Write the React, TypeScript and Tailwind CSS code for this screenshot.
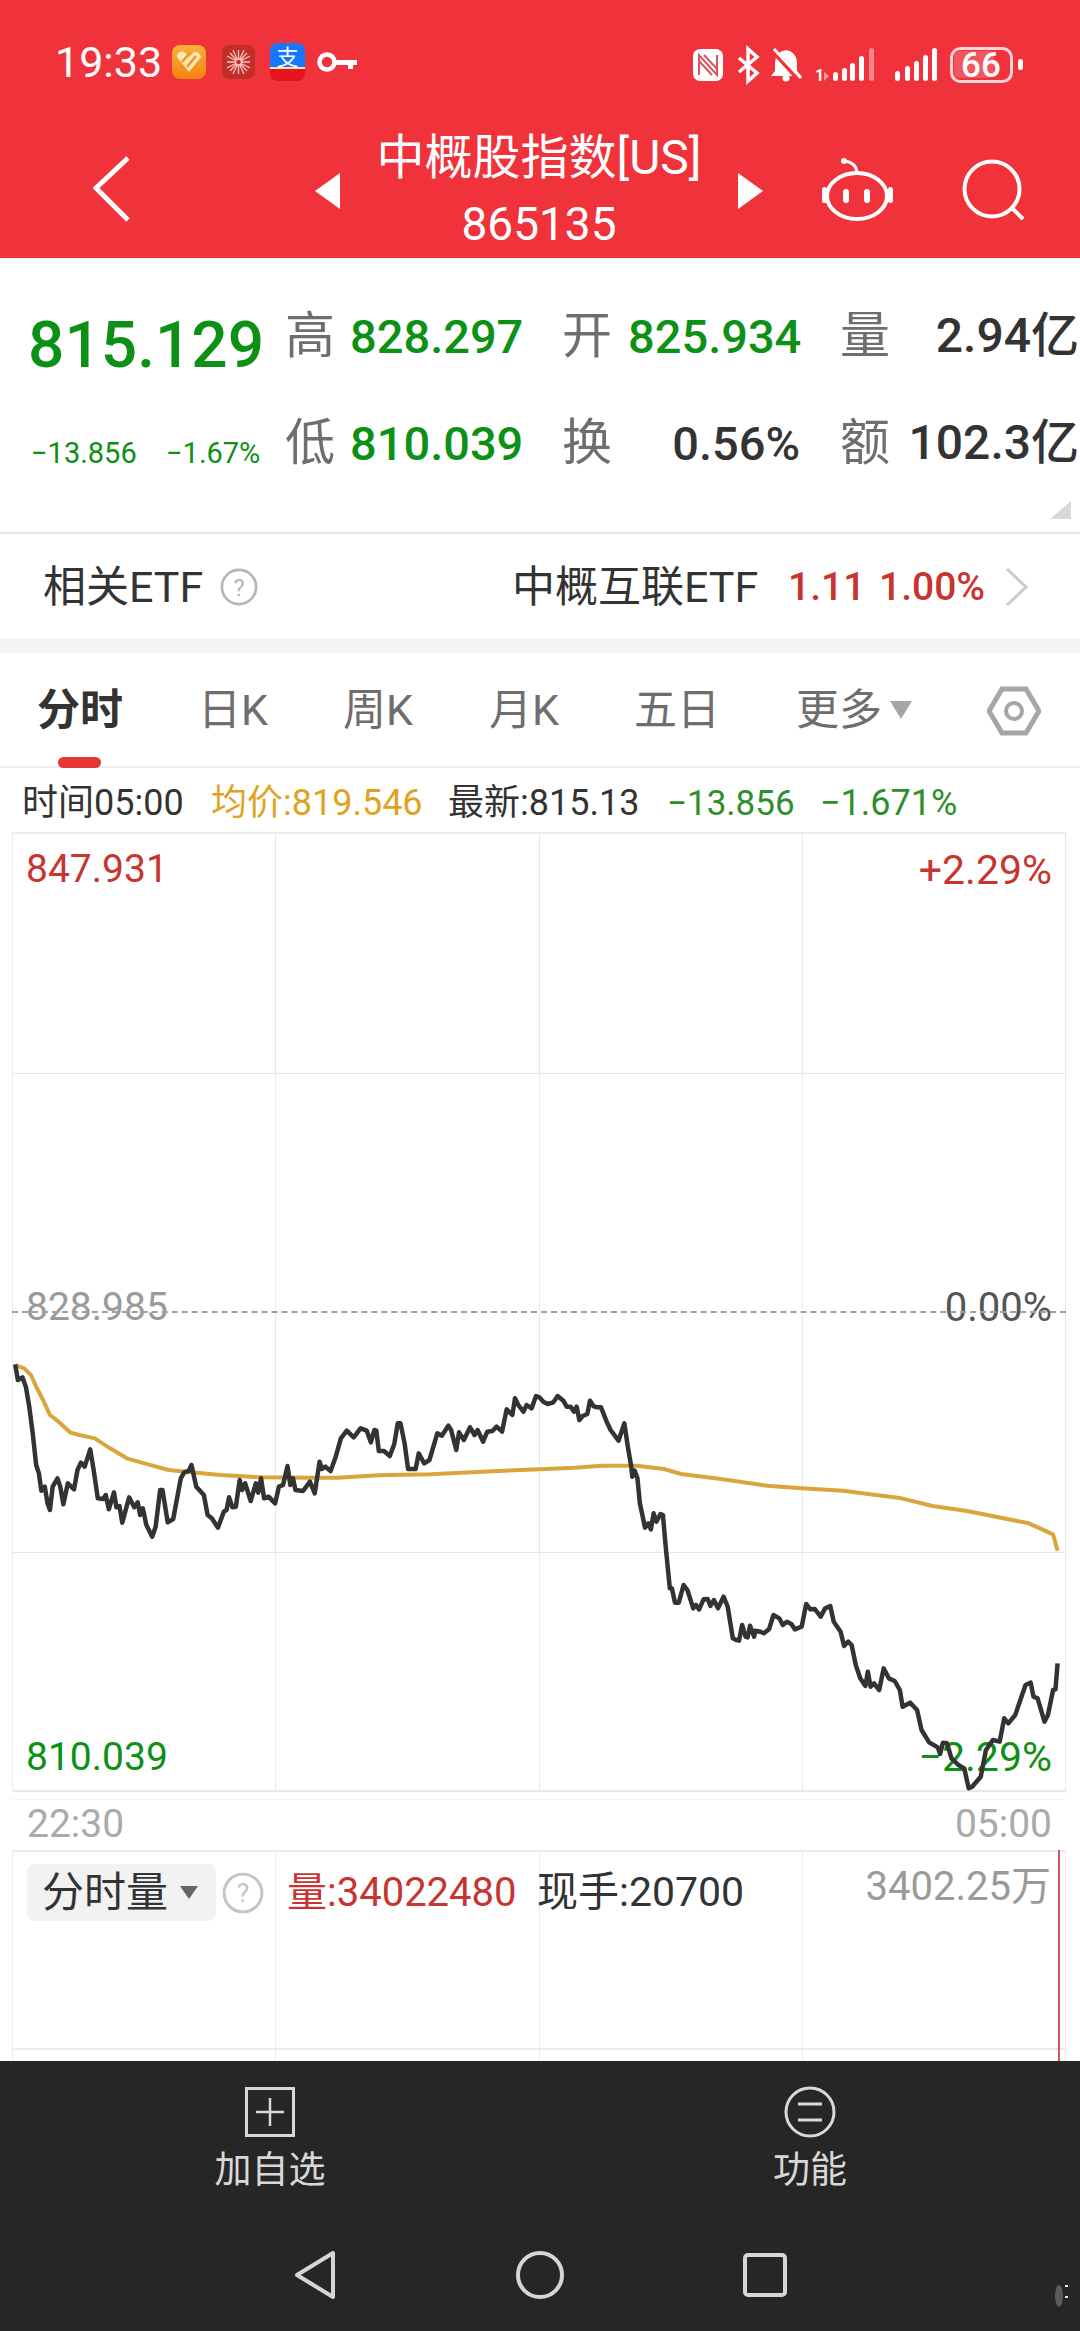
const priceA = [[44,283],[52,330],[65,322],[75,350],[85,410],[95,490],[105,585],[113,610],[120,662],[130,650],[138,700],[145,720],[153,650],[167,625],[175,650],[184,703],[197,640],[215,658],[225,600],[235,578],[246,590],[262,538],[272,600],[284,685],[300,687],[307,675],[316,718],[331,667],[338,712],[347,708],[355,758],[375,682],[390,712],[400,697],[407,735],[415,715],[425,765],[442,800],[452,770],[465,660],[472,660],[487,757],[503,747],[525,625],[535,607],[548,603],[556,585],[570,650],[592,675],[603,735],[615,745],[633,773],[650,725],[658,720],[665,682],[675,712],[685,710],[696,630],[703,660],[712,640],[728,693],[743,640],[750,668],[758,625],[767,685],[780,680],[799,700],[810,650],[822,645],[835,588],[843,645],[851,625],[858,660],[880,663],[900,635],[914,670],[928,575],[935,597],[945,590],[960,603],[975,560],[990,505],[1007,482],[1027,502],[1047,475],[1065,482],[1077,517],[1087,480],[1093,482],[1100,543],[1115,543],[1132,558],[1145,522],[1155,460],[1163,460],[1175,520],[1185,597],[1207,597],[1216,550],[1232,580],[1247,570],[1270,490],[1283,497],[1302,467],[1310,480],[1325,540],[1333,487],[1347,510],[1365,472],[1378,495],[1387,480],[1403,515],[1415,485],[1430,483],[1442,470],[1458,485]];
const priceB = [[20,118],[37,135],[45,85],[55,105],[70,125],[80,105],[95,115],[108,78],[118,82],[130,95],[143,102],[160,97],[173,78],[190,92],[200,110],[212,110],[222,125],[230,110],[238,150],[248,138],[262,132],[270,92],[280,108],[292,112],[303,112],[320,155]];
const priceC = [[205,90],[228,122],[245,70],[255,140],[265,200],[268,230],[275,212],[283,235],[290,310],[305,383],[315,370],[322,388],[330,340],[338,365],[350,342],[357,345],[365,440],[377,565],[383,565],[392,608],[403,608],[417,555],[428,570],[445,625],[453,615],[462,628],[475,598],[487,597],[495,618],[505,600],[517,625],[533,590],[545,620],[560,715],[570,720],[578,722],[587,675],[597,710],[603,712],[610,677],[622,710],[625,692],[640,695],[650,700],[665,688],[678,645],[695,655],[705,675],[717,665],[730,672],[740,688],[760,680],[773,612],[785,628],[798,627],[815,650],[828,625],[843,618],[853,665],[873,695],[883,738],[895,725],[905,735],[917,795],[930,835],[945,858],[952,815],[960,860],[970,850],[985,870],[998,805],[1013,835],[1030,843],[1045,870],[1053,920],[1075,908],[1095,930],[1108,990],[1130,1027],[1155,1042],[1162,1062],[1170,1028],[1182,1030],[1195,1075],[1215,1095],[1232,1105],[1245,1165],[1255,1160],[1280,1130],[1295,1050],[1315,1020],[1335,1025],[1348,955],[1360,970],[1380,945],[1395,900],[1410,855],[1425,848],[1433,890],[1445,895],[1465,965],[1475,945],[1490,870],[1497,868],[1503,790]];
const avgA = [[44,285],[70,295],[90,315],[105,350],[125,390],[145,435],[170,455],[205,488],[230,495],[275,505],[320,535],[368,565],[430,583],[490,600],[540,605],[640,615],[760,622],[900,623],[980,623],[1100,616],[1250,613],[1400,605],[1568,598]];
const avgC = [[0,208],[100,203],[180,197],[280,197],[360,207],[410,222],[520,236],[660,257],[760,265],[880,272],[1050,295],[1140,318],[1240,333],[1420,370],[1490,403],[1503,452]];

const fromA = (p: number[]) => `${p[0] / 2.904},${1270 + p[1] / 3}`;
const fromB = (p: number[]) => `${500 + p[0] / 3},${1370 + p[1] / 3}`;
const fromC = (p: number[]) => `${540 + p[0] / 2.904},${1400 + p[1] / 3}`;

const pricePoints = [...priceA.map(fromA), ...priceB.map(fromB), ...priceC.map(fromC)].join(" ");
const avgPoints = [...avgA.map(fromA), ...avgC.map(fromC)].join(" ");

const Tri = ({ dir }: { dir: "l" | "r" }) => (
  <svg width="25" height="36" viewBox="0 0 25 36" className="mt-[48px]">
    <polygon points={dir === "l" ? "25,0 25,36 0,18" : "0,0 0,36 25,18"} fill="#fff" />
  </svg>
);

const Help = ({ size, color }: { size: number; color: string }) => (
  <svg width={size} height={size} viewBox="0 0 40 40">
    <circle cx="20" cy="20" r="18" fill="none" stroke={color} strokeWidth="2.8" />
    <text x="20" y="29" textAnchor="middle" fontSize="25" fill={color} fontFamily="Roboto">?</text>
  </svg>
);

const StatusLeft = () => (
  <div className="flex items-center h-[34px] pl-[55px]">
    <span className="w-[117px] text-[43px] leading-none text-white">19:33</span>
    <svg width="185" height="40" viewBox="172 42 185 40">
      <defs>
        <linearGradient id="hg" x1="0" y1="0" x2="0" y2="1">
          <stop offset="0" stopColor="#fbb03b" />
          <stop offset="1" stopColor="#f5820f" />
        </linearGradient>
      </defs>
      <rect x="172" y="45" width="34" height="34" rx="8" fill="url(#hg)" />
      <path d="M177 57 L189 72 L201 57 Q199 51 194 52 L189 57 Q184 50 180 52 Q177 53 177 57Z" fill="#ffe9b8" />
      <path d="M182 62 L190 53 M187 67 L196 56" stroke="#f7931e" strokeWidth="2.5" />
      <rect x="222" y="45" width="33" height="34" rx="7" fill="#c22f2a" />
      <g stroke="#f6c4bc" strokeWidth="1.3">
        <path d="M238.500 50 V74 M227 62 H250 M230 53 L247 71 M247 53 L230 71 M233 50 L244 74 M244 50 L233 74 M227 56 L250 68 M250 56 L227 68" />
      </g>
      <circle cx="238.500" cy="62" r="3" fill="#c22f2a" stroke="#f6c4bc" strokeWidth="1.500" />
      <rect x="270" y="43" width="35" height="36" rx="8" fill="#1677ff" />
      <path d="M270 69 H305 V73 Q305 81 297 81 H278 Q270 81 270 73Z" fill="#e5141e" />
      <rect x="270" y="67" width="35" height="2" fill="#ffe2b0" />
      <text x="287.500" y="65" textAnchor="middle" fontSize="22" fill="#fff">支</text>
      <circle cx="327" cy="62" r="7.500" fill="none" stroke="#fff" strokeWidth="4.500" />
      <path d="M335 60 H357 V65 H353 V69 H348 V65 H335Z" fill="#fff" />
    </svg>
  </div>
);

const StatusRight = () => (
  <svg width="335" height="40" viewBox="690 42 335 40" className="ml-auto mr-[55px]">
    <rect x="693" y="46" width="30" height="32" rx="7" fill="#fff" />
    <path d="M699 72 V52 L717 72 V52 M704 52 L717 66 M699 58 L712 72" fill="none" stroke="#e2525b" strokeWidth="2" />
    <path d="M739 55 L757 70 L748 78 V46 L757 54 L739 69" fill="none" stroke="#fff" strokeWidth="3.500" />
    <path d="M786 47 Q797 49 797 60 V68 L801 73 H771 L775 68 V60 Q775 49 786 47Z" fill="#fff" />
    <circle cx="786" cy="75" r="3.500" fill="#fff" />
    <path d="M772 46 L801 78" stroke="#f0323b" strokeWidth="6" />
    <path d="M774 46 L801 75" stroke="#fff" strokeWidth="3" />
    <text x="815" y="78" fontSize="16" fontWeight="700" fill="#fff" fontFamily="Roboto">1</text>
    <polygon points="824,69 829,73 824,78" fill="#fff" opacity="0.5" />
    <rect x="833" y="69" width="5" height="9" rx="2.500" fill="#fff" />
    <rect x="842" y="65" width="5" height="13" rx="2.500" fill="#fff" />
    <rect x="850" y="60" width="5" height="18" rx="2.500" fill="#fff" />
    <rect x="859" y="53" width="5" height="25" rx="2.500" fill="#fff" />
    <rect x="869" y="45" width="5" height="33" rx="2.500" fill="#fff" opacity="0.4" />
    <rect x="895" y="68" width="5" height="10" rx="2.500" fill="#fff" />
    <rect x="905" y="63" width="5" height="15" rx="2.500" fill="#fff" />
    <rect x="914" y="58" width="5" height="20" rx="2.500" fill="#fff" />
    <rect x="923" y="52" width="5" height="26" rx="2.500" fill="#fff" />
    <rect x="932" y="45" width="5" height="33" rx="2.500" fill="#fff" />
    <rect x="954" y="48" width="40" height="27" rx="6" fill="#fff" opacity="0.18" />
    <rect x="951.500" y="45.500" width="60" height="33" rx="9" fill="none" stroke="#fbd5d7" strokeWidth="3" />
    <text x="981" y="74" textAnchor="middle" fontSize="35" fontWeight="500" fill="#fff" fontFamily="Roboto">66</text>
    <rect x="1018" y="56" width="5" height="11" rx="2.500" fill="#fff" />
  </svg>
);

const Header = () => (
  <header className="h-[258px] bg-[#f0323b] pt-[45px] shrink-0">
    <div className="flex">
      <StatusLeft />
      <StatusRight />
    </div>
    <div className="flex mt-[40px] h-[136px]">
      <svg width="37" height="66" viewBox="93 150 37 66" className="ml-[93px] mt-[31px]">
        <polyline points="128,152 96,182 128,214" fill="none" stroke="#fff" strokeWidth="5" />
      </svg>
      <div className="ml-[185px] flex">
        <Tri dir="l" />
        <div className="w-[398px] text-center text-white">
          <div className="h-[67px] leading-[65px] text-[48px]">中概股指数[US]</div>
          <div className="h-[65px] leading-[65px] text-[46px]">865135</div>
        </div>
        <Tri dir="r" />
      </div>
      <svg width="72" height="64" viewBox="822 152 72 64" className="ml-[59px] mt-[33px]">
        <circle cx="844" cy="155" r="3" fill="#fff" />
        <path d="M845 155 Q856 157 857 166" fill="none" stroke="#fff" strokeWidth="3" />
        <ellipse cx="857" cy="190" rx="30" ry="23" fill="none" stroke="#fff" strokeWidth="4" />
        <rect x="822" y="181" width="5" height="16" rx="2.500" fill="#fff" />
        <rect x="888" y="181" width="5" height="16" rx="2.500" fill="#fff" />
        <rect x="843" y="183" width="6" height="14" rx="3" fill="#fff" />
        <rect x="864" y="183" width="6" height="14" rx="3" fill="#fff" />
      </svg>
      <svg width="64" height="64" viewBox="962 152 64 64" className="ml-[68px] mt-[33px]">
        <circle cx="992" cy="183" r="27.500" fill="none" stroke="#fff" strokeWidth="4" />
        <path d="M1012 202 L1023 213" stroke="#fff" strokeWidth="4" />
      </svg>
    </div>
  </header>
);

const Quote = () => (
  <section className="relative h-[274px] pt-[34px] shrink-0 border-t border-[#eeeeee]">
    <div className="flex items-center h-[86px] pl-[31px]">
      <div className="w-[254px] mt-[20px]">
        <span className="block -ml-[3px] text-[64px] leading-none font-medium text-[#0c9015]">815.129</span>
      </div>
      <span className="w-[65px] text-[50px] leading-none text-[#6e6e6e]">高</span>
      <span className="w-[172px] text-[47px] leading-none font-medium text-[#0c9015]">828.297</span>
      <span className="ml-[40px] w-[66px] text-[50px] leading-none text-[#6e6e6e]">开</span>
      <span className="w-[172px] text-right text-[47px] leading-none font-medium text-[#0c9015]">825.934</span>
      <span className="ml-[40px] w-[50px] text-[50px] leading-none text-[#6e6e6e]">量</span>
      <span className="w-[189px] text-right text-[48px] leading-none font-medium text-[#333333]">2.94亿</span>
    </div>
    <div className="flex items-center h-[86px] mt-[21px] pl-[31px]">
      <div className="w-[254px] mt-[20px] flex text-[29px] leading-none text-[#0c9015]">
        <span className="w-[135px]">−13.856</span>
        <span>−1.67%</span>
      </div>
      <span className="w-[65px] text-[50px] leading-none text-[#6e6e6e]">低</span>
      <span className="w-[172px] text-[47px] leading-none font-medium text-[#0c9015]">810.039</span>
      <span className="ml-[40px] w-[66px] text-[50px] leading-none text-[#6e6e6e]">换</span>
      <span className="w-[172px] text-right text-[47px] leading-none font-medium text-[#333333]">0.56%</span>
      <span className="ml-[40px] w-[50px] text-[50px] leading-none text-[#6e6e6e]">额</span>
      <span className="w-[189px] text-right text-[48px] leading-none font-medium text-[#333333]">102.3亿</span>
    </div>
    <svg width="21" height="18" viewBox="0 0 21 18" className="absolute right-[9px] bottom-[13px]">
      <polygon points="21,0 21,18 0,18" fill="#d8d8d8" />
    </svg>
  </section>
);

const EtfRow = () => (
  <section className="flex items-center h-[106px] pt-[2px] pl-[43px] shrink-0 border-t-2 border-[#e8e8e8] text-[#333333] text-[43px] leading-none">
    <span className="w-[177px]">相关ETF</span>
    <Help size={38} color="#b5b5b5" />
    <span className="ml-[254px] w-[276px]">中概互联ETF</span>
    <span className="w-[91px] text-[#c8342f] font-medium text-[39px]">1.11</span>
    <span className="w-[126px] text-[#c8342f] font-medium text-[39px]">1.00%</span>
    <svg width="24" height="38" viewBox="0 0 24 38">
      <polyline points="2,1 21,19 2,37" fill="none" stroke="#cccccc" strokeWidth="3" />
    </svg>
  </section>
);

const tabs = [
  { label: "日K", w: "w-[145px]" },
  { label: "周K", w: "w-[146px]" },
  { label: "月K", w: "w-[145px]" },
  { label: "五日", w: "w-[162px]" },
];

const Tabs = () => (
  <section className="relative flex items-center h-[115px] pt-[2px] pl-[37px] shrink-0 border-b-2 border-[#eeeeee] text-[43px] leading-none text-[#6e6e6e]">
    <span className="w-[161px] font-bold text-[#333333]">分时</span>
    {tabs.map((t) => (
      <span key={t.label} className={t.w}>{t.label}</span>
    ))}
    <span className="w-[94px]">更多</span>
    <svg width="22" height="18" viewBox="0 0 22 18" className="mb-[2px]">
      <polygon points="0,0 22,0 11,18" fill="#a6a6a6" />
    </svg>
    <svg width="54" height="50" viewBox="985 686 54 50" className="ml-[75px]">
      <polygon points="1000,689 1024,689 1037,711 1024,733 1000,733 987,711" fill="none" stroke="#a6a6a6" strokeWidth="5" />
      <circle cx="1012" cy="711" r="8" fill="none" stroke="#a6a6a6" strokeWidth="4" />
    </svg>
    <div className="absolute left-[58px] bottom-[-2px] w-[43px] h-[11px] rounded-full bg-[#e53535]" />
  </section>
);

const QuoteLine = () => (
  <section className="flex items-center h-[64px] pt-[6px] pl-[22px] shrink-0 text-[36px] leading-none">
    <span className="w-[189px] text-[#333333]">时间05:00</span>
    <span className="w-[237px] text-[#dfa31f]">均价:819.546</span>
    <span className="w-[219px] text-[#333333]">最新:815.13</span>
    <span className="w-[153px] text-[35px] text-[#2e8f2a]">−13.856</span>
    <span className="text-[#2e8f2a]">−1.671%</span>
  </section>
);

const rows = [0, 1, 2, 3];
const cols = [0, 1, 2, 3];

const PriceChart = () => (
  <section className="relative ml-[12px] w-[1054px] h-[960px] shrink-0">
    <div className="grid grid-cols-4 grid-rows-4 h-full border-t-2 border-l border-[#ebebeb]">
      {rows.map((r) =>
        cols.map((c) => (
          <div
            key={`${r}-${c}`}
            className={
              r === 1
                ? "border-r border-[#ebebeb] border-b-2 border-b-[#ffffff]"
                : r === 3
                  ? "border-r border-[#ebebeb] border-b-2 border-b-[#e8e8e8]"
                  : "border-r border-b border-[#e8e8e8]"
            }
          />
        )),
      )}
    </div>
    <div className="absolute left-[14px] top-[18px] text-[39px] leading-none text-[#c8342f]">847.931</div>
    <div className="absolute right-[14px] top-[18px] text-[41px] leading-none text-[#c8342f]">+2.29%</div>
    <div className="absolute left-[14px] top-[456px] text-[39px] leading-none text-[#9a9a9a]">828.985</div>
    <div className="absolute right-[14px] top-[456px] text-[40px] leading-none text-[#555555]">0.00%</div>
    <div className="absolute left-[14px] top-[906px] text-[39px] leading-none text-[#0c9015]">810.039</div>
    <div className="absolute right-[14px] top-[905px] text-[41px] leading-none text-[#0c9015]">−2.29%</div>
    <div className="absolute left-0 right-0 top-[479px] border-t-2 border-dashed border-[#a0a0a0]" />
    <svg width="1054" height="960" viewBox="12 832 1054 960" className="absolute left-0 top-0">
      <polyline points={avgPoints} fill="none" stroke="#d9a53c" strokeWidth="4" strokeLinejoin="round" />
      <polyline points={pricePoints} fill="none" stroke="#333333" strokeWidth="4.500" strokeLinejoin="round" />
    </svg>
  </section>
);

const TimeAxis = () => (
  <section className="flex items-center justify-between mt-[7px] ml-[12px] w-[1054px] h-[51px] pb-[2px] pl-[15px] pr-[14px] shrink-0 border-t border-[#f4f4f4] text-[39px] leading-none text-[#aaaaaa]">
    <span>22:30</span>
    <span>05:00</span>
  </section>
);

const Volume = () => (
  <section className="relative ml-[12px] w-[1054px] h-[211px] shrink-0 overflow-hidden">
    <div className="grid grid-cols-4 grid-rows-[198px_13px] h-full border-t-2 border-l border-[#ebebeb]">
      {[0, 1].map((r) =>
        cols.map((c) => (
          <div key={`${r}-${c}`} className="border-r border-b-2 border-[#ebebeb]" />
        )),
      )}
    </div>
    <div className="absolute left-[1046px] top-0 bottom-0 w-[2px] bg-[#d4555a]" />
    <div className="absolute left-[15px] top-[14px] flex items-center h-[57px] text-[40px] leading-none">
      <div className="flex items-center w-[189px] h-[57px] pl-[15px] rounded-[8px] bg-[#f2f2f2] text-[42px] text-[#333333]">
        <span className="w-[138px]">分时量</span>
        <svg width="18" height="13" viewBox="0 0 18 13">
          <polygon points="0,0 18,0 9,13" fill="#666666" />
        </svg>
      </div>
      <div className="ml-[6px] w-[65px]">
        <Help size={42} color="#c4c4c4" />
      </div>
      <span className="w-[250px] text-[#c8342f]">量:34022480</span>
      <span className="text-[41px] text-[#333333]">现手:20700</span>
    </div>
    <div className="absolute right-[15px] top-[17px] text-[40px] leading-none text-[#9a9a9a]">3402.25万</div>
  </section>
);

const BottomBar = () => (
  <footer className="relative flex-1 bg-[#262626] text-[#d8d8d8]">
    <div className="grid grid-cols-2 pt-[25px]">
      <div className="flex flex-col items-center">
        <svg width="52" height="52" viewBox="0 0 52 52">
          <rect x="2.500" y="2.500" width="47" height="47" fill="none" stroke="#d8d8d8" strokeWidth="3" />
          <path d="M26 12 V40 M12 26 H40" stroke="#d8d8d8" strokeWidth="2.500" />
        </svg>
        <span className="mt-[11px] h-[44px] leading-[44px] text-[37px]">加自选</span>
      </div>
      <div className="flex flex-col items-center">
        <svg width="52" height="52" viewBox="0 0 52 52">
          <circle cx="26" cy="26" r="24" fill="none" stroke="#d8d8d8" strokeWidth="3" />
          <path d="M14 18 H38 M14 34 H38" stroke="#d8d8d8" strokeWidth="3" />
        </svg>
        <span className="mt-[11px] h-[44px] leading-[44px] text-[37px]">功能</span>
      </div>
    </div>
    <div className="grid grid-cols-3 place-items-center w-[675px] mx-auto mt-[57px]">
      <svg width="44" height="50" viewBox="0 0 44 50">
        <polygon points="40,3 40,47 4,25" fill="none" stroke="#d6d6d6" strokeWidth="4" strokeLinejoin="round" />
      </svg>
      <svg width="50" height="50" viewBox="0 0 50 50">
        <circle cx="25" cy="25" r="22" fill="none" stroke="#d6d6d6" strokeWidth="4" />
      </svg>
      <svg width="46" height="46" viewBox="0 0 46 46">
        <rect x="3" y="3" width="40" height="40" rx="3" fill="none" stroke="#d6d6d6" strokeWidth="4" />
      </svg>
    </div>
    <svg width="24" height="34" viewBox="0 0 24 34" className="absolute right-[6px] bottom-[18px]">
      <ellipse cx="9" cy="17" rx="4" ry="11" fill="#5a5a5a" />
      <rect x="15" y="6" width="3" height="2" fill="#e8e8e8" />
      <rect x="15" y="17" width="3" height="2" fill="#e8e8e8" />
    </svg>
  </footer>
);

export default function App() {
  return (
    <div className="flex flex-col w-[1080px] h-[2331px] overflow-hidden bg-white font-[Roboto,'Noto_Sans_CJK_SC',sans-serif]">
      <Header />
      <Quote />
      <EtfRow />
      <div className="h-[15px] bg-[#f5f5f5] shrink-0" />
      <Tabs />
      <QuoteLine />
      <PriceChart />
      <TimeAxis />
      <Volume />
      <BottomBar />
    </div>
  );
}
